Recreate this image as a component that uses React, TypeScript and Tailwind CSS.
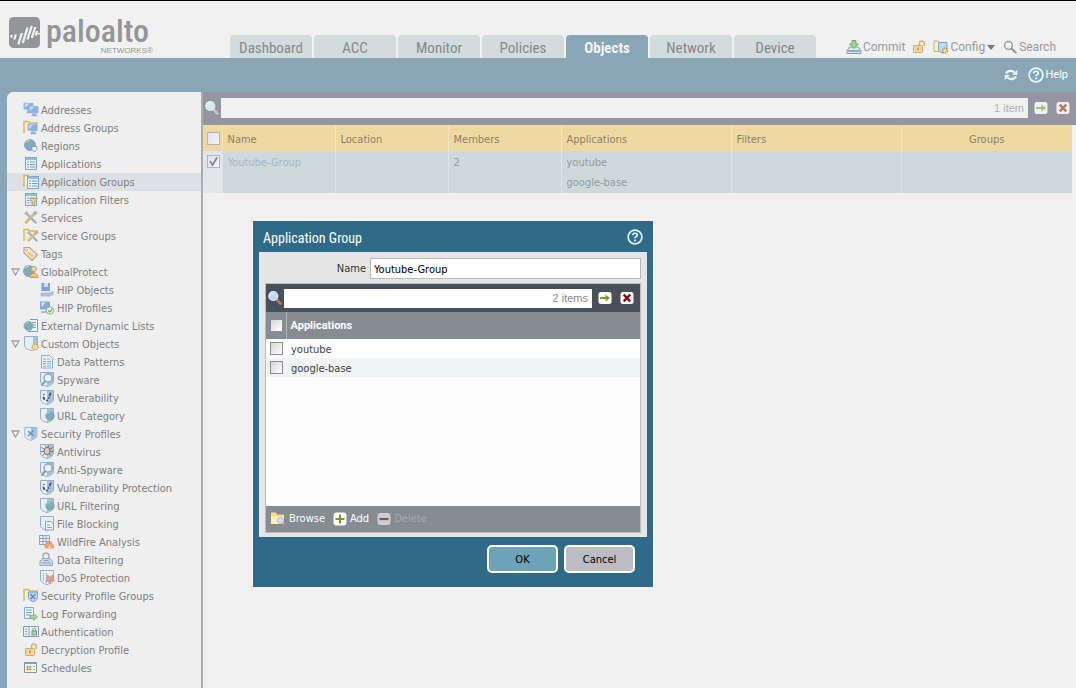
import React, { useState } from "react";

const BODY = "font-['DejaVu_Sans_Condensed','DejaVu_Sans',sans-serif]";
const NARROW = "font-['Roboto_Condensed','Roboto',sans-serif]";

type IconName =
  | "addresses" | "addressGroups" | "regions" | "apps" | "appGroups" | "appFilters"
  | "services" | "serviceGroups" | "tags" | "globalProtect" | "hipObjects" | "hipProfiles"
  | "externalLists" | "customObjects" | "dataPatterns" | "spyware" | "vulnerability" | "url"
  | "securityProfiles" | "antivirus" | "fileBlocking" | "wildfire" | "dataFiltering" | "dos"
  | "profileGroups" | "log" | "auth" | "decryption" | "schedules";

/* ---------- shared icon parts ---------- */

const Shield = () => (
  <path d="M1.500.500h13v8.500c0 2.800-2.500 4.500-6.500 5.500-4-1-6.500-2.700-6.500-5.500z" fill="#e6eef6" stroke="#93afcd" />
);
const ShieldShade = () => <path d="M8 1h6v8c0 2.500-2.200 4-6 5z" fill="#a3c1e0" />;
const Folder = () => (
  <path d="M1 13V1.500h4.500l1 1.500H14v2" fill="#f6ecd0" stroke="#dbb668" strokeWidth="1.400" />
);
const Globe = ({ x = 7, y = 7, r = 5.5 }: { x?: number; y?: number; r?: number }) => (
  <g transform={`translate(${x} ${y}) scale(${r / 6})`}>
    <circle r="6" fill="#7faad6" stroke="#6f9bc6" strokeWidth=".8" />
    <path d="M-4.500-3.500C-2-6 1-5.500 2-4.500L0-2l-2 .5-1 2-2-1zM1 0l3-1.500L5.500 1 3 4.500 1 3zM-3 2l2 1-.5 2.500L-3.500 4z" fill="#7fb088" />
    <path d="M-4-2.500C-3-4.500-1-5 0-5" stroke="#d9eaf7" fill="none" />
  </g>
);
const Sheet = ({ x = 0 }: { x?: number }) => (
  <g transform={`translate(${x} 0)`}>
    <rect x="1.500" y="1.500" width="11" height="12" fill="#eaf3fa" stroke="#7fa9d2" />
    <path d="M2 3h10" stroke="#7fa9d2" strokeWidth="1.500" />
    <path d="M3 6h2M6 6h5.500M3 8.500h2M6 8.500h5.500M3 11h2M6 11h5.500" stroke="#6f9fce" strokeWidth="1.200" />
  </g>
);
const Monitor = ({ x = 1, y = 1 }: { x?: number; y?: number }) => (
  <g transform={`translate(${x} ${y})`}>
    <path d="M0 0l9 .5V7L0 6z" fill="#86b2e6" stroke="#8fb0dc" strokeWidth=".8" />
    <path d="M.5.500h5L1 5z" fill="#c6dcf5" />
    <path d="M3 8h4M2.500 9.500h6" stroke="#a3b2d2" strokeWidth="1.300" />
  </g>
);
const Wrench = () => (
  <>
    <path d="M3 3l9.500 9.500" stroke="#8fb2d4" strokeWidth="2.400" strokeLinecap="round" />
    <path d="M1 4.500L4 1l2 4z" fill="#9fb9d2" />
    <path d="M12 3L3 12.500" stroke="#dcbc72" strokeWidth="2.600" strokeLinecap="round" />
    <path d="M10 2.500c1-2 4.500-1.500 4.500.5l-2 2.500-2.500-1z" fill="#a3b8ca" />
  </>
);
const Lens = () => (
  <>
    <circle cx="9" cy="6" r="4" fill="#f0f6fb" stroke="#86a6c9" strokeWidth="1.300" />
    <path d="M6.200 9L3 13" stroke="#86a6c9" strokeWidth="2.200" strokeLinecap="round" />
  </>
);
const Padlock = () => (
  <>
    <path d="M8.500 7V4.500a2.400 2.400 0 0 1 4.800 0V7" fill="none" stroke="#dcb06b" strokeWidth="1.500" />
    <rect x="2.500" y="6.500" width="9" height="7" rx=".8" fill="#f2d6a2" stroke="#d9a862" />
    <path d="M7 8.500V11" stroke="#b98545" strokeWidth="1.400" />
  </>
);

const ICONS: Record<IconName, React.ReactNode> = {
  addresses: (
    <>
      <Monitor x={1} y={1} />
      <Monitor x={6} y={4} />
    </>
  ),
  addressGroups: (
    <>
      <Folder />
      <Monitor x={5} y={4} />
    </>
  ),
  regions: (
    <>
      <Globe />
      <path d="M9 8.500h5v3L11.500 14 9 11.500z" fill="#e9f0f7" stroke="#7fa3c8" />
    </>
  ),
  apps: <Sheet x={1} />,
  appGroups: (
    <>
      <Folder />
      <g transform="translate(2 1)"><Sheet x={1} /></g>
    </>
  ),
  appFilters: (
    <>
      <Sheet x={1} />
      <path d="M6.500 6.500h8l-3 3.500v4l-2-1v-3z" fill="#e7cf9e" stroke="#b99a6a" strokeWidth=".8" />
    </>
  ),
  services: <Wrench />,
  serviceGroups: (
    <>
      <Folder />
      <g transform="translate(3 2) scale(.85)"><Wrench /></g>
    </>
  ),
  tags: (
    <>
      <path d="M1 1.500h5.500L14.500 9 9 14.500 1 7z" fill="#f6ead0" stroke="#c39c79" strokeWidth="1.100" />
      <path d="M6 5l5.500 5-2.500 2.500L4 7.500z" fill="#ecc98d" />
      <circle cx="3.600" cy="3.900" r="1" fill="#fff" stroke="#b98f6d" strokeWidth=".7" />
    </>
  ),
  globalProtect: (
    <>
      <Globe x={6} y={7} r={5.500} />
      <circle cx="11" cy="5" r="2.500" fill="#f2d9a8" stroke="#c99c5d" />
      <path d="M7 13.500c0-6 8-6 8 0z" fill="#ecc781" stroke="#c99c5d" />
    </>
  ),
  hipObjects: (
    <>
      <path d="M2.500 1H11v8H2.500z" fill="#869fe0" />
      <path d="M5 1h4v4H5z" fill="#d3def6" />
      <path d="M2 11h9l3-1.500v3L11 14H2z" fill="#b5c2e6" stroke="#98a9da" strokeWidth=".7" />
    </>
  ),
  hipProfiles: (
    <>
      <path d="M1 1.500h10v8H1z" fill="#86a9e0" />
      <path d="M2 2.500h5L3 7z" fill="#cfe0f6" />
      <path d="M2 12h7" stroke="#a9b9d8" strokeWidth="2" />
      <circle cx="11" cy="10.500" r="3.700" fill="#eef7ec" stroke="#86b977" />
      <path d="M9.200 10.500l1.500 1.500 2.500-3" fill="none" stroke="#74ad60" strokeWidth="1.200" />
    </>
  ),
  externalLists: (
    <>
      <path d="M7 1.500h7.500v12H5" fill="#edf4fa" stroke="#7d9fc0" />
      <path d="M9 4.500h4M10 7h3M10 9.500h3" stroke="#7da0c3" />
      <Globe x={5.500} y={8} r={4.500} />
    </>
  ),
  customObjects: (
    <>
      <Shield />
      <path d="M10 1h4v8h-4z" fill="#a3c1e0" />
      <circle cx="12" cy="11" r="2.800" fill="#f7e2a0" stroke="#d6a84e" strokeWidth="1.600" strokeDasharray="1.500 .8" />
    </>
  ),
  dataPatterns: (
    <>
      <path d="M2.500 1.500h8l3 3v9.500h-11z" fill="#edf5fb" stroke="#7fb0d8" />
      <path d="M4 5h3M8 5h3M4 7.500h3M8 7.500h4M4 9.700h3M8 9.700h4M4 12h3M8 12h4" stroke="#7aa9d4" />
    </>
  ),
  spyware: (
    <>
      <Shield />
      <ShieldShade />
      <Lens />
    </>
  ),
  vulnerability: (
    <>
      <Shield />
      <ShieldShade />
      <path d="M4.500 7.500l.8 1.500M11.500 3.500l-.8 2" stroke="#4f5b68" strokeWidth="2" strokeLinecap="round" />
      <circle cx="8" cy="10.500" r="1.100" fill="#4f5b68" />
      <circle cx="5" cy="4.500" r=".8" fill="#4f5b68" />
      <circle cx="9.500" cy="8" r=".9" fill="#4f5b68" />
    </>
  ),
  url: (
    <>
      <Shield />
      <ShieldShade />
      <Globe x={11} y={8} r={4.300} />
    </>
  ),
  securityProfiles: (
    <g transform="translate(.5 1) scale(.92)">
      <Shield />
      <ShieldShade />
      <path d="M5 4.500l6 5M11 3.500l-6 6.500" stroke="#6691c4" strokeWidth="1.500" />
    </g>
  ),
  antivirus: (
    <>
      <Shield />
      <ShieldShade />
      <ellipse cx="8" cy="7" rx="3" ry="3.600" fill="#e9c9b4" stroke="#7d6f70" />
      <path d="M2.500 3.500l3 2M2 7.500h3M3.500 11.500L6 9.500M13.500 3.500l-3 2M14 7.500h-3M12.500 11.500L10 9.500M6.500 1.500l1 2M10 1.500l-1 2" stroke="#7d6f70" />
    </>
  ),
  fileBlocking: (
    <>
      <Shield />
      <path d="M6.500 5.500H11.500L14.500 8v6h-8z" fill="#f0f6fb" stroke="#7fa5cf" />
      <path d="M8 9h3M8 11.500h5" stroke="#7fa5cf" />
    </>
  ),
  wildfire: (
    <>
      <path d="M.5 1.500h10v9H.5z" fill="#eaf1f8" stroke="#86a8d0" />
      <path d="M1 4.500h9M1 7.500h9M4 2v8M7 2v8" stroke="#86a8d0" />
      <path d="M6.500 14c-2-3 1.500-4 1.500-7 2 1 2 2 2.500 3L12 7.500c0 2 3.500 3.500 2.500 6.500z" fill="#f0a577" stroke="#e58a5c" strokeWidth=".8" />
      <path d="M9 14c0-2 1.500-2 1.500-3 1 1 1.500 2 1.500 3z" fill="#f8dca0" />
    </>
  ),
  dataFiltering: (
    <>
      <path d="M4 7V4a3 3 0 0 1 6 0v3" fill="none" stroke="#a0abbf" strokeWidth="1.500" />
      <path d="M1 13.500V9l3-2.500h6.500L13.500 9v4.500z" fill="#ccd5e3" stroke="#9fabc2" />
      <path d="M3 11h8.500M5 8.500h4.500" stroke="#8fa0bd" />
    </>
  ),
  dos: (
    <>
      <Shield />
      <path d="M4.500 3v8M7.500 3v9" stroke="#a5b8d2" />
      <path d="M8.500 5l2.500 2 3-2-.5 3.500L15.500 11l-3.500 0-.5 3-2-2.500-3 .5 2-2.500z" fill="#e09a9a" stroke="#cc7f82" strokeWidth=".6" />
    </>
  ),
  profileGroups: (
    <>
      <Folder />
      <path d="M5.500 4h9v5.500c0 2-2 3.200-4.500 4.200-2.500-1-4.500-2.200-4.500-4.200z" fill="#bdd5ee" stroke="#7fa2cc" />
      <path d="M7.500 6l4.500 5M12.500 6l-5 5" stroke="#5f8bc2" strokeWidth="1.300" />
    </>
  ),
  log: (
    <>
      <path d="M1.500 1.500h9v11h-9z" fill="#ecf4fa" stroke="#7fabd4" />
      <path d="M3 4h6M3 6.500h6M3 9h5" stroke="#7fabd4" />
      <path d="M7 9.500h3.500V7.500l4 3.500-4 3.500v-2H7z" fill="#a4d39b" stroke="#77b56c" strokeWidth=".8" />
    </>
  ),
  auth: (
    <>
      <path d="M.5 2.500h15v10H.5z" fill="#edf3f8" stroke="#7f9fc3" />
      <path d="M2 5h2M2 7.500h2M2 10h2M6 3v9" stroke="#7f9fc3" />
      <rect x="9" y="7" width="4.500" height="4" fill="#b9cf9f" stroke="#7b9a76" />
      <path d="M10 7V5.500a1.300 1.300 0 0 1 2.600 0V7" fill="none" stroke="#6f93a9" />
    </>
  ),
  decryption: <Padlock />,
  schedules: (
    <>
      <path d="M1.500 2.500h12v10h-12z" fill="#f4f1e6" stroke="#7fa08f" />
      <path d="M1 3h13" stroke="#7ba3c3" strokeWidth="2" />
      <path d="M4.500 6v4.500M7 6v4.500M3.500 7h5M3.500 9.500h5" stroke="#c98f68" />
      <path d="M10 6.500h2M10 9.500h2" stroke="#9fb5a2" />
    </>
  ),
};

const TreeIcon = ({ name }: { name: IconName }) => (
  <svg viewBox="0 0 16 16" className="size-4 shrink-0" aria-hidden="true">{ICONS[name]}</svg>
);

/* ---------- toolbar icons ---------- */

const Magnifier = ({ faded = false }: { faded?: boolean }) => (
  <svg viewBox="0 0 16 16" className="size-4 shrink-0" aria-hidden="true">
    <path d="M9.500 9.500l4 4" stroke={faded ? "#c9c3c4" : "#b8775a"} strokeWidth="2.600" strokeLinecap="round" />
    <circle cx="6.300" cy="6" r="4.500" fill={faded ? "#d9e6f2" : "#b9dcf6"} stroke={faded ? "#e6edf4" : "#dcecf8"} strokeWidth="1.200" />
    <path d="M3.500 5.500c.5-1.500 2-2 3.500-1.800" stroke="#fff" fill="none" />
  </svg>
);

const ArrowTile = ({ faded = false }: { faded?: boolean }) => (
  <svg viewBox="0 0 14 14" className="size-3.5" aria-hidden="true">
    <rect x=".5" y="1" width="13" height="12" rx="2.500" fill={faded ? "#f0f1ee" : "#fff"} />
    <path d="M2 7h7" stroke={faded ? "#a9bf77" : "#7d9c22"} strokeWidth="2" />
    <path d="M7.500 3.500L12 7l-4.500 3.500z" fill={faded ? "#a9bf77" : "#7d9c22"} />
  </svg>
);

const CrossTile = ({ faded = false }: { faded?: boolean }) => (
  <svg viewBox="0 0 14 14" className="size-3.5" aria-hidden="true">
    <rect x=".5" y="1" width="13" height="12" rx="2.500" fill={faded ? "#f1efee" : "#fff"} />
    <path d="M3.700 3.700l6.600 6.600M10.300 3.700l-6.600 6.600" stroke={faded ? "#b5776b" : "#7c1210"} strokeWidth="2.400" />
  </svg>
);

const HelpIcon = ({ faded = false }: { faded?: boolean }) => (
  <svg viewBox="0 0 16 16" className="size-4" aria-hidden="true">
    <circle cx="8" cy="8" r="6.900" fill={faded ? "#7fa6c3" : "#2d6fa0"} stroke={faded ? "#eef4f8" : "#e2f1fb"} strokeWidth="1.700" />
    <path d="M5.800 6.300c0-2.700 4.500-2.700 4.500-.2C10.300 7.700 8 7.700 8 9.300M8 10.500v1.700" fill="none" stroke="#fff" strokeWidth="1.600" />
  </svg>
);

const CommitIcon = () => (
  <svg viewBox="0 0 16 16" className="size-4" aria-hidden="true">
    <path d="M3.500 8L1 11.500v3h14v-3L12.500 8z" fill="#dde6ef" stroke="#7d9dbf" />
    <path d="M2 12h12" stroke="#7d9dbf" strokeWidth="1.500" />
    <path d="M6 1.500h4V5h2.500L8 9.500 3.500 5H6z" fill="#a5d596" stroke="#6fae62" />
  </svg>
);

const ConfigIcon = () => (
  <svg viewBox="0 0 16 16" className="size-4" aria-hidden="true">
    <path d="M1 12.500V2h4l1 1.500h3v9z" fill="#f8edcf" stroke="#d9b366" />
    <path d="M5.500 3.500h8.500v6c0 2.500-1.700 3.700-4.200 4.700-2.500-1-4.300-2.200-4.300-4.700z" fill="#bfd8f2" stroke="#7ba4d3" />
    <circle cx="12" cy="11.500" r="2.400" fill="#f5dfa2" stroke="#b99554" strokeWidth="1.500" strokeDasharray="1.500 .7" />
  </svg>
);

const SearchIcon = () => (
  <svg viewBox="0 0 14 14" className="size-3.5" aria-hidden="true">
    <circle cx="5.500" cy="5.500" r="3.900" fill="#f0f2f4" stroke="#9a9ea5" strokeWidth="1.500" />
    <path d="M8.500 8.500l4 4" stroke="#93979e" strokeWidth="2.200" strokeLinecap="round" />
  </svg>
);

const RefreshIcon = () => (
  <svg viewBox="0 0 14 14" className="size-3.5" aria-hidden="true">
    <path d="M2 5.500C3.500 2.500 8 2 10.500 4.500M12 8.500C10.500 11.500 6 12 3.500 9.500" fill="none" stroke="#eef4f7" strokeWidth="2.400" />
    <path d="M13.300 2v5H8zM.7 12V7H6z" fill="#eef4f7" />
  </svg>
);

const Logo = () => (
  <div className="flex gap-1.5 pt-4 pl-[9px] text-[#939598]">
    <svg viewBox="0 0 31 31" className="size-[31px]" aria-hidden="true">
      <rect width="31" height="31" rx="4.500" fill="#939598" />
      <path
        d="M2 20.500l.8-2.500M5.300 22.500l1.500-5M9.300 27.500l3.600-11.500M13.800 26l4.700-15.500M18.500 22.500l4.200-13.500M22.800 21l3.500-11M26.700 18.500l1.400-4.500M29.600 17.500l.5-1.500"
        stroke="#f1f1f1" strokeWidth="2.300" fill="none"
      />
    </svg>
    <div className="flex flex-col">
      <span className={`${NARROW} text-[32px] leading-7 font-medium`}>paloalto</span>
      <span className="-mr-1 self-end font-['Liberation_Sans',sans-serif] text-[8px] leading-3">NETWORKS®</span>
    </div>
  </div>
);

/* ---------- form parts ---------- */

const CheckBox = ({ label, initial = false, faded = false }: { label: string; initial?: boolean; faded?: boolean }) => {
  const [on, setOn] = useState(initial);
  return (
    <label className="grid size-[13px] shrink-0">
      <input
        type="checkbox"
        aria-label={label}
        checked={on}
        onChange={() => setOn(!on)}
        className={`peer col-start-1 row-start-1 size-[13px] appearance-none border bg-linear-to-br ${
          faded ? "border-[#b3b7bc] from-[#dce5ee] to-[#f3f3f3]" : "border-[#8b8f94] from-[#d5d5d5] to-white"
        }`}
      />
      <svg viewBox="0 0 13 13" className="pointer-events-none invisible col-start-1 row-start-1 size-[13px] peer-checked:visible" aria-hidden="true">
        <path d="M3 6l2.500 4L10 2.500" fill="none" stroke="#85888c" strokeWidth="1.700" />
      </svg>
    </label>
  );
};

/* ---------- navigation tree ---------- */

type Node = { label: string; icon: IconName; level?: 1; open?: true };

const TREE: Node[] = [
  { label: "Addresses", icon: "addresses" },
  { label: "Address Groups", icon: "addressGroups" },
  { label: "Regions", icon: "regions" },
  { label: "Applications", icon: "apps" },
  { label: "Application Groups", icon: "appGroups" },
  { label: "Application Filters", icon: "appFilters" },
  { label: "Services", icon: "services" },
  { label: "Service Groups", icon: "serviceGroups" },
  { label: "Tags", icon: "tags" },
  { label: "GlobalProtect", icon: "globalProtect", open: true },
  { label: "HIP Objects", icon: "hipObjects", level: 1 },
  { label: "HIP Profiles", icon: "hipProfiles", level: 1 },
  { label: "External Dynamic Lists", icon: "externalLists" },
  { label: "Custom Objects", icon: "customObjects", open: true },
  { label: "Data Patterns", icon: "dataPatterns", level: 1 },
  { label: "Spyware", icon: "spyware", level: 1 },
  { label: "Vulnerability", icon: "vulnerability", level: 1 },
  { label: "URL Category", icon: "url", level: 1 },
  { label: "Security Profiles", icon: "securityProfiles", open: true },
  { label: "Antivirus", icon: "antivirus", level: 1 },
  { label: "Anti-Spyware", icon: "spyware", level: 1 },
  { label: "Vulnerability Protection", icon: "vulnerability", level: 1 },
  { label: "URL Filtering", icon: "url", level: 1 },
  { label: "File Blocking", icon: "fileBlocking", level: 1 },
  { label: "WildFire Analysis", icon: "wildfire", level: 1 },
  { label: "Data Filtering", icon: "dataFiltering", level: 1 },
  { label: "DoS Protection", icon: "dos", level: 1 },
  { label: "Security Profile Groups", icon: "profileGroups" },
  { label: "Log Forwarding", icon: "log" },
  { label: "Authentication", icon: "auth" },
  { label: "Decryption Profile", icon: "decryption" },
  { label: "Schedules", icon: "schedules" },
];

const Sidebar = () => (
  <nav aria-label="Objects" className="w-[196px] shrink-0 rounded-tl-md border-r-2 border-[#a9adb3] bg-[#efefef] py-[9px]">
    <ul>
      {TREE.map((n) => (
        <li key={n.label}>
          <a
            href="#"
            className={`flex h-[18px] items-center text-[11px] whitespace-nowrap text-[#808080] ${n.level ? "pl-8" : "pl-1"} ${
              n.label === "Application Groups" ? "bg-[#dde1e5]" : ""
            }`}
          >
            {!n.level && (
              <span className="flex w-3 shrink-0">
                {n.open && (
                  <svg viewBox="0 0 9 8" className="h-2 w-[9px]" aria-hidden="true">
                    <path d="M1 1h7L4.500 7z" fill="#f4f4f4" stroke="#a39fa3" strokeWidth="1.300" />
                  </svg>
                )}
              </span>
            )}
            <TreeIcon name={n.icon} />
            <span className="pt-0.5 pl-0.5">{n.label}</span>
          </a>
        </li>
      ))}
    </ul>
  </nav>
);

/* ---------- header ---------- */

const TABS = ["Dashboard", "ACC", "Monitor", "Policies", "Objects", "Network", "Device"];

const Header = () => (
  <header className="flex h-[58px] justify-between border-t border-black bg-[#f1f1f1]">
    <div className="flex">
      <div className="w-[230px]">
        <Logo />
      </div>
      <nav aria-label="Main" className={`flex items-end gap-0.5 ${NARROW}`}>
        {TABS.map((t) => (
          <a
            key={t}
            href="#"
            className={`flex h-[23px] w-[82px] items-center justify-center rounded-t-[4px] pt-1 text-[15px] ${
              t === "Objects" ? "bg-[#8aa5b6] font-bold text-[#f3f6f8]" : "bg-[#d4dbdc] text-[#858a8f]"
            }`}
          >
            {t}
          </a>
        ))}
      </nav>
    </div>
    <div className="flex items-end pr-5 pb-[3px] font-['Roboto',sans-serif] text-xs leading-4 text-[#9a9a9e]">
      <button type="button" className="flex items-center gap-px"><CommitIcon />Commit</button>
      <button type="button" aria-label="Config locks" className="ml-1.5">
        <svg viewBox="0 0 16 16" className="size-4" aria-hidden="true"><Padlock /></svg>
      </button>
      <button type="button" className="ml-1.5 flex items-center gap-px">
        <ConfigIcon />Config
        <svg viewBox="0 0 8 5" className="ml-px h-[5px] w-2" aria-hidden="true"><path d="M0 0h8L4 5z" fill="#77797c" /></svg>
      </button>
      <button type="button" className="ml-2 flex items-center gap-0.5"><SearchIcon />Search</button>
    </div>
  </header>
);

/* ---------- object list ---------- */

const HEAD = "border-l border-white/30 px-[5px] pt-1 pb-0 text-left font-normal";
const CELL = "border-l border-white/30 px-[5px] pt-0.5 pb-0";

const ObjectList = () => (
  <main className="min-w-0 flex-1 bg-[#f0f0f0]">
    <div className="flex h-[33px] items-center bg-[#9495a0] pr-1.5 pb-px">
      <span className="flex w-[18px] justify-center"><Magnifier faded /></span>
      <div className="flex h-5 flex-1 items-center bg-[#f0f0f0] pr-1">
        <input type="text" aria-label="Filter application groups" className="h-full min-w-0 flex-1 bg-transparent px-1 text-[11px] outline-none" />
        <span className="font-['Liberation_Sans',sans-serif] text-[11px] text-[#b0b0b0]">1 item</span>
      </div>
      <button type="button" aria-label="Apply filter" className="ml-1.5"><ArrowTile faded /></button>
      <button type="button" aria-label="Clear filter" className="ml-2"><CrossTile faded /></button>
    </div>
    <div className="pr-1">
      <table className="w-full table-fixed border-collapse text-[11px]">
        <colgroup>
          <col className="w-[19px]" />
          <col className="w-[113px]" />
          <col className="w-[113px]" />
          <col className="w-[113px]" />
          <col className="w-[170px]" />
          <col className="w-[170px]" />
          <col />
        </colgroup>
        <thead>
          <tr className="h-[26px] bg-[#eed9a1] text-[#8b8269]">
            <th className="p-0 pl-1"><CheckBox label="Select all groups" faded /></th>
            <th className={HEAD}>Name</th>
            <th className={HEAD}>Location</th>
            <th className={HEAD}>Members</th>
            <th className={HEAD}>Applications</th>
            <th className={HEAD}>Filters</th>
            <th className="border-l border-white/30 px-[5px] pt-1 pb-0 text-center font-normal">Groups</th>
          </tr>
        </thead>
        <tbody>
          <tr className="h-10 bg-[#cfd8da] align-top leading-5 text-[#979c9f]">
            <td className="bg-[#e3e6e8] p-0 pt-1 pl-1"><CheckBox label="Select Youtube-Group" initial faded /></td>
            <td className={CELL}><a href="#" className="text-[#9dbcce]">Youtube-Group</a></td>
            <td className={CELL} />
            <td className={CELL}>2</td>
            <td className={CELL}>youtube<br />google-base</td>
            <td className={CELL} />
            <td className={CELL} />
          </tr>
        </tbody>
      </table>
    </div>
  </main>
);

/* ---------- dialog ---------- */

const ACTION = "flex items-center gap-[3px] text-[11px] text-white";

const GroupDialog = () => {
  const [name, setName] = useState("Youtube-Group");
  return (
    <section
      role="dialog"
      aria-labelledby="dialog-title"
      className="absolute top-[221px] left-[253px] w-[400px] bg-[#2f6a89] px-1.5 text-[11px] outline outline-white/60"
    >
      <div className="flex h-[31px] items-center justify-between px-1">
        <h2 id="dialog-title" className={`${NARROW} pt-1 text-[14px] text-white`}>Application Group</h2>
        <button type="button" aria-label="Help"><HelpIcon /></button>
      </div>
      <div className="bg-[#e5e5e5] px-1.5 pt-1.5 pb-1">
        <div className="flex items-center justify-end gap-1">
          <label htmlFor="group-name" className="pt-0.5 text-[#333]">Name</label>
          <input
            id="group-name"
            type="text"
            value={name}
            onChange={(e) => setName(e.target.value)}
            className="h-[21px] w-[271px] border border-[#b5b8bd] bg-white px-[3px] pt-px text-black outline-none"
          />
        </div>
        <div className="mt-1 border border-[#b9bbbd]">
          <div className="flex h-7 items-center bg-[#48515a] pr-1.5">
            <span className="flex w-[18px] justify-center"><Magnifier /></span>
            <div className="flex h-[19px] flex-1 items-center bg-white pr-1">
              <input type="text" aria-label="Filter applications" className="h-full min-w-0 flex-1 bg-transparent px-1 outline-none" />
              <span className="font-['Liberation_Sans',sans-serif] text-[11px] text-[#8a8a8a]">2 items</span>
            </div>
            <button type="button" aria-label="Apply filter" className="ml-1.5"><ArrowTile /></button>
            <button type="button" aria-label="Clear filter" className="ml-2"><CrossTile /></button>
          </div>
          <div className="h-[194px] bg-[#fdfdfd]">
            <table className="w-full table-fixed border-collapse text-left">
              <thead>
                <tr className="h-[27px] bg-[#878c92] text-white">
                  <th className="w-5 p-0 pl-1"><CheckBox label="Select all applications" /></th>
                  <th className="border-l border-[#b3b6ba] px-1 pt-0.5 pb-0 font-['Roboto',sans-serif]">Applications</th>
                </tr>
              </thead>
              <tbody className="text-[#3b3f44]">
                {["youtube", "google-base"].map((a) => (
                  <tr key={a} className="h-[19px] bg-white even:bg-[#f2f3f4]">
                    <td className="p-0 pl-1"><CheckBox label={`Select ${a}`} /></td>
                    <td className="px-[5px] pt-[3px] pb-0 leading-4">{a}</td>
                  </tr>
                ))}
              </tbody>
            </table>
          </div>
          <div className="flex h-[26px] items-center gap-2 bg-[#858c92] px-1">
            <button type="button" className={ACTION}>
              <svg viewBox="0 0 16 16" className="size-4" aria-hidden="true">
                <path d="M1 13V1.500h5l1 2h7V13z" fill="#f7dd86" />
                <path d="M1 5.500h13V13H1z" fill="#fff0b8" />
                <circle cx="10.500" cy="9.500" r="3" fill="#cfe0f4" stroke="#a9bfdf" />
                <path d="M12.500 12l2 2" stroke="#e19b63" strokeWidth="1.700" />
              </svg>
              Browse
            </button>
            <button type="button" className={ACTION}>
              <svg viewBox="0 0 14 14" className="size-3.5" aria-hidden="true">
                <rect x=".5" y=".5" width="13" height="13" rx="3" fill="#fff" />
                <path d="M7 2.500v9M2.500 7h9" stroke="#7c9a23" strokeWidth="2.200" />
              </svg>
              Add
            </button>
            <button type="button" disabled className="flex items-center gap-[3px] text-[11px] text-[#a3a9ae]">
              <svg viewBox="0 0 14 14" className="size-3.5" aria-hidden="true">
                <rect x=".5" y="1" width="13" height="12" rx="3" fill="#ccced1" />
                <path d="M2.500 7h9" stroke="#8a4a55" strokeWidth="2.200" />
              </svg>
              Delete
            </button>
          </div>
        </div>
      </div>
      <div className="flex h-[50px] justify-end gap-1.5 px-3 pt-2">
        <button type="button" className="h-7 w-[71px] rounded-[5px] border-2 border-white bg-[#6da2b9] pt-[3px] text-black">OK</button>
        <button type="button" className="h-7 w-[71px] rounded-[5px] border-2 border-white bg-[#bcbcc4] pt-[3px] text-black">Cancel</button>
      </div>
    </section>
  );
};

export default function App() {
  return (
    <div className={`relative flex min-h-screen flex-col bg-[#f0f0f0] ${BODY}`}>
      <Header />
      <div className="flex h-[34px] items-center justify-end gap-2.5 bg-[#8aa5b6] pr-2 font-['Roboto',sans-serif] text-[11px] text-white">
        <button type="button" aria-label="Refresh"><RefreshIcon /></button>
        <button type="button" className="flex items-center gap-px"><HelpIcon faded />Help</button>
      </div>
      <div className="flex flex-1 bg-[#8aa5b6] pl-[7px]">
        <Sidebar />
        <ObjectList />
      </div>
      <GroupDialog />
    </div>
  );
}
